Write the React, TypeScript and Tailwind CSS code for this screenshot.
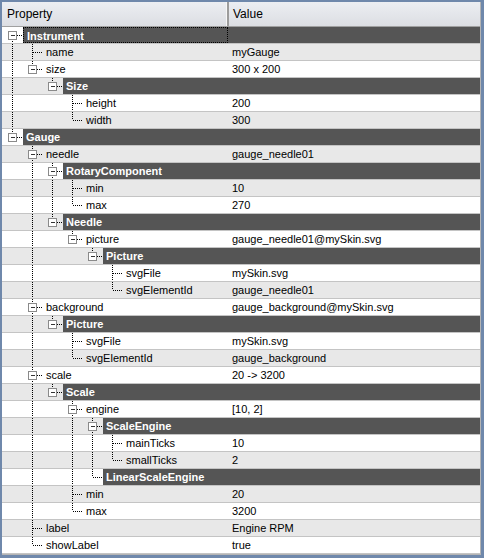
import React from "react";

type Node = { label: string; value?: string; cat?: boolean; children?: Node[] };

const tree: Node[] = [
  {
    label: "Instrument",
    cat: true,
    children: [
      { label: "name", value: "myGauge" },
      {
        label: "size",
        value: "300 x 200",
        children: [
          {
            label: "Size",
            cat: true,
            children: [
              { label: "height", value: "200" },
              { label: "width", value: "300" },
            ],
          },
        ],
      },
    ],
  },
  {
    label: "Gauge",
    cat: true,
    children: [
      {
        label: "needle",
        value: "gauge_needle01",
        children: [
          {
            label: "RotaryComponent",
            cat: true,
            children: [
              { label: "min", value: "10" },
              { label: "max", value: "270" },
            ],
          },
          {
            label: "Needle",
            cat: true,
            children: [
              {
                label: "picture",
                value: "gauge_needle01@mySkin.svg",
                children: [
                  {
                    label: "Picture",
                    cat: true,
                    children: [
                      { label: "svgFile", value: "mySkin.svg" },
                      { label: "svgElementId", value: "gauge_needle01" },
                    ],
                  },
                ],
              },
            ],
          },
        ],
      },
      {
        label: "background",
        value: "gauge_background@mySkin.svg",
        children: [
          {
            label: "Picture",
            cat: true,
            children: [
              { label: "svgFile", value: "mySkin.svg" },
              { label: "svgElementId", value: "gauge_background" },
            ],
          },
        ],
      },
      {
        label: "scale",
        value: "20 -> 3200",
        children: [
          {
            label: "Scale",
            cat: true,
            children: [
              {
                label: "engine",
                value: "[10, 2]",
                children: [
                  {
                    label: "ScaleEngine",
                    cat: true,
                    children: [
                      { label: "mainTicks", value: "10" },
                      { label: "smallTicks", value: "2" },
                    ],
                  },
                  { label: "LinearScaleEngine", cat: true },
                ],
              },
              { label: "min", value: "20" },
              { label: "max", value: "3200" },
            ],
          },
        ],
      },
      { label: "label", value: "Engine RPM" },
      { label: "showLabel", value: "true" },
    ],
  },
];

type Row = { node: Node; depth: number; isLast: boolean; anc: boolean[]; first: boolean };

function flatten(nodes: Node[], depth: number, anc: boolean[], out: Row[]) {
  nodes.forEach((n, i) => {
    const isLast = i === nodes.length - 1;
    out.push({ node: n, depth, isLast, anc, first: out.length === 0 });
    if (n.children) flatten(n.children, depth + 1, [...anc, !isLast], out);
  });
  return out;
}

const rows = flatten(tree, 0, [], []);

function TreeLines({ row }: { row: Row }) {
  const { depth, isLast, anc, first, node } = row;
  const W = 21 + 20 * depth;
  const cx = 10.5 + 20 * depth;
  const hasKids = !!node.children;
  return (
    <svg width={W} height={16} className="shrink-0 block" shapeRendering="crispEdges">
      {anc.map((cont, k) =>
        cont ? (
          <line
            key={k}
            x1={10.5 + 20 * k}
            x2={10.5 + 20 * k}
            y1={0}
            y2={16}
            stroke="#000"
            strokeDasharray="1 1"
          />
        ) : null
      )}
      <line
        x1={cx}
        x2={cx}
        y1={first ? 8 : 0}
        y2={isLast ? 8 : 16}
        stroke="#000"
        strokeDasharray="1 1"
      />
      <line x1={cx} x2={W} y1={8.5} y2={8.5} stroke="#000" strokeDasharray="1 1" />
      {hasKids && (
        <g>
          <rect x={6.5 + 20 * depth} y={4.5} width={8} height={8} fill="#fff" stroke="#8a8a8a" />
          <line x1={8.5 + 20 * depth} x2={12.5 + 20 * depth} y1={8.5} y2={8.5} stroke="#333" />
        </g>
      )}
    </svg>
  );
}

export default function App() {
  return (
    <div
      className="w-[484px] h-[558px] bg-[#6f88ab] pt-[2px] pl-[2px] pr-[3px] pb-[3px] text-[11px] text-black"
      style={{ fontFamily: '"Liberation Sans", Arial, sans-serif' }}
    >
      <div className="h-full bg-white border-r border-b border-[#b4b4b4] flex flex-col overflow-hidden">
        <div className="flex h-[25px] shrink-0 border-b border-[#a0a0a0] bg-gradient-to-b from-[#eceef2] to-[#dcdee3] text-[12px]">
          <div className="w-[225px] pl-[5px] flex items-center border-r border-[#f6f6f6]">Property</div>
          <div className="w-[2px] bg-[#9c9c9c]" />
          <div className="flex-1 pl-[4px] flex items-center">Value</div>
        </div>
        {rows.map((r, i) => {
          const bg = i % 2 === 1 ? "bg-[#e8e8e8]" : "bg-white";
          const isFocus = i === 0;
          return (
            <div key={i} className={`flex h-[17px] shrink-0 border-b border-[#c4c4c4] ${bg}`}>
              <div className="flex w-[226px] shrink-0">
                <TreeLines row={r} />
                {r.node.cat ? (
                  <div
                    className={`flex-1 bg-[#555555] text-white font-bold pl-[3px] leading-[16px] whitespace-nowrap ${
                      isFocus ? "border border-dotted border-black leading-[14px] pl-[2px]" : ""
                    }`}
                  >
                    {r.node.label}
                  </div>
                ) : (
                  <div className="flex-1 pl-[3px] leading-[16px] whitespace-nowrap">{r.node.label}</div>
                )}
              </div>
              {r.node.cat ? (
                <div className="flex-1 bg-[#555555]" />
              ) : (
                <div className="flex-1 pl-[4px] leading-[16px] whitespace-nowrap">{r.node.value}</div>
              )}
            </div>
          );
        })}
      </div>
    </div>
  );
}
